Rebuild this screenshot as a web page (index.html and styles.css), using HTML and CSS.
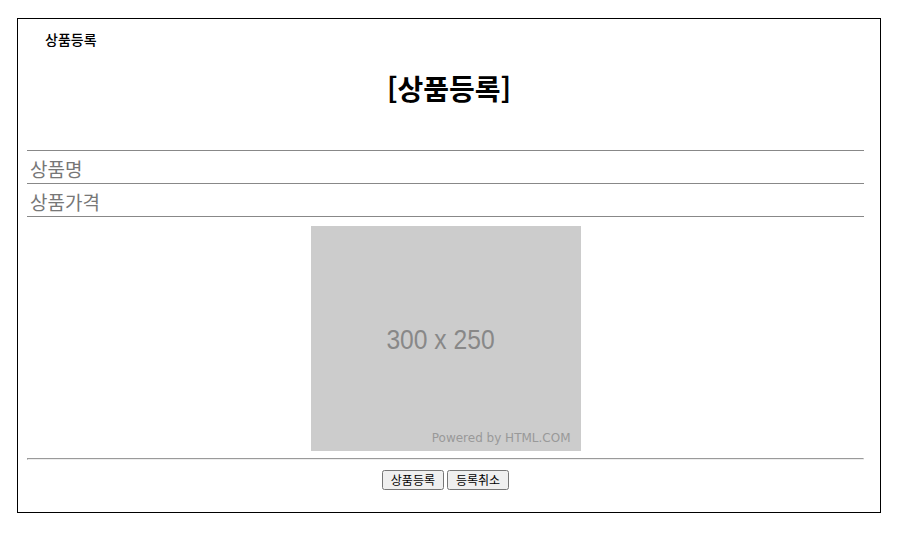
FILE: index.html
```html
<!DOCTYPE html>
<html lang="ko">
<head>
  <meta charset="UTF-8">
  <title>상품등록</title>
  <link rel="stylesheet" href="styles.css">
</head>
<body>

  <div class="wrap">
    <p class="crumb">상품등록</p>
    <h1>[상품등록]</h1>

    <form id="productForm">
      <input type="text" class="field" placeholder="상품명">
      <input type="text" class="field" placeholder="상품가격">

      <div class="preview">
        <div class="thumb">
          <span class="size">300 x 250</span>
          <span class="credit">Powered by HTML.COM</span>
        </div>
      </div>

      <hr>

      <div class="actions">
        <button type="submit">상품등록</button>
        <button type="reset">등록취소</button>
      </div>
    </form>
  </div>

</body>
</html>
```

FILE: styles.css
```css
body {
  margin: 0;
  font-family: "Noto Sans CJK KR", "Noto Sans", sans-serif;
  background: #fff;
}

.wrap {
  margin: 18px 16px 0 17px;
  border: 1px solid #000;
  padding: 10px 16px 22px 9px;
}

.crumb {
  margin: 0 0 0 18px;
  font-size: 14px;
  line-height: 20px;
  font-weight: 500;
  color: #000;
}

h1 {
  margin: 20px 0 0;
  padding-left: 7px;
  font-size: 28px;
  line-height: 38px;
  text-align: center;
}

form {
  margin-top: 43px;
  border-top: 1px solid #888;
}

.field {
  display: block;
  width: 100%;
  box-sizing: border-box;
  height: 33px;
  border: 0;
  border-bottom: 1px solid #888;
  padding: 2px 3px 0;
  font-family: "Noto Sans CJK KR", "Noto Sans", sans-serif;
  font-size: 19px;
  outline: none;
}

.field::placeholder {
  color: #777;
}

.preview {
  display: flex;
  justify-content: center;
  padding-top: 9px;
}

.thumb {
  position: relative;
  width: 270px;
  height: 225px;
  background: #ccc;
  display: flex;
  align-items: center;
  justify-content: center;
}

.size {
  font-family: "Liberation Sans", Arial, sans-serif;
  font-size: 28px;
  color: #888;
  transform: scaleX(0.88);
  margin: 3px 10px 0 0;
}

.credit {
  position: absolute;
  right: 10px;
  bottom: 6px;
  font-family: "DejaVu Sans", sans-serif;
  font-size: 12px;
  color: #999;
}

hr {
  margin: 7px 0 0;
}

.actions {
  display: flex;
  justify-content: center;
  gap: 3px;
  margin-top: 10px;
}

button {
  font-family: "Noto Sans CJK KR", sans-serif;
  font-size: 12px;
  height: 20px;
  padding: 0 7px;
  line-height: 16px;
}
```
